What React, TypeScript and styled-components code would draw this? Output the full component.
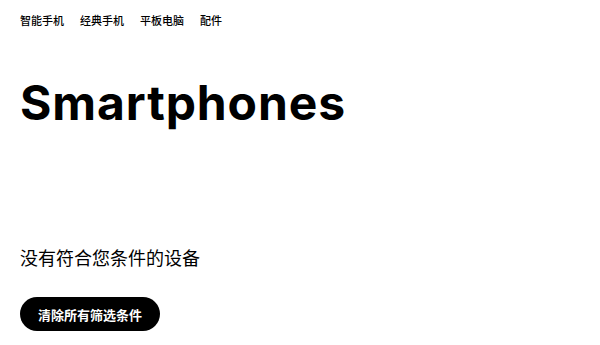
import React from "react";
import styled, { createGlobalStyle } from "styled-components";

const GlobalStyle = createGlobalStyle`
  html, body {
    margin: 0;
    padding: 0;
    background: #ffffff;
  }
  body {
    font-family: Inter, "Noto Sans CJK SC", sans-serif;
    color: #000;
  }
`;

const Page = styled.main`
  display: flex;
  flex-direction: column;
  padding: 0 20px;
`;

const SubNav = styled.nav`
  display: flex;
  align-items: center;
  gap: 16px;
  height: 40px;
`;

const NavLink = styled.a`
  font-family: "Noto Sans CJK SC", sans-serif;
  font-size: 11px;
  font-weight: 500;
  color: #000;
  text-decoration: none;
  line-height: 1;
`;

const Title = styled.h1`
  margin: 34px 0 0;
  font-family: Inter, "Noto Sans CJK SC", sans-serif;
  font-size: 48px;
  font-weight: 700;
  letter-spacing: 0.9px;
  line-height: 58px;
`;

const EmptyMessage = styled.p`
  margin: 112px 0 0;
  font-family: "Noto Sans CJK SC", sans-serif;
  font-size: 18px;
  font-weight: 400;
  line-height: 26px;
`;

const ClearButton = styled.button`
  align-self: flex-start;
  margin-top: 27px;
  height: 34px;
  padding: 0 18px;
  border: none;
  border-radius: 17px;
  background: #000;
  color: #fff;
  font-family: "Noto Sans CJK SC", sans-serif;
  font-size: 13px;
  font-weight: 700;
  cursor: pointer;
`;

const categories = ["智能手机", "经典手机", "平板电脑", "配件"];

const App = () => {
  return (
    <>
      <GlobalStyle />
      <Page>
        <SubNav>
          {categories.map((c) => (
            <NavLink key={c} href="#">
              {c}
            </NavLink>
          ))}
        </SubNav>
        <Title>Smartphones</Title>
        <EmptyMessage>没有符合您条件的设备</EmptyMessage>
        <ClearButton>清除所有筛选条件</ClearButton>
      </Page>
    </>
  );
};

export default App;
